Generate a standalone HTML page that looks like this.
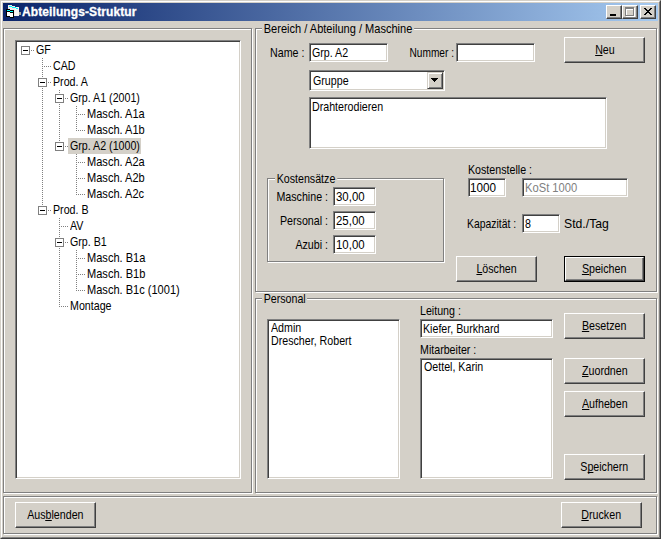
<!DOCTYPE html>
<html><head><meta charset="utf-8">
<style>
*{margin:0;padding:0;box-sizing:border-box}
html,body{width:661px;height:539px;overflow:hidden;background:#D4D0C8}
body{position:relative;font-family:"Liberation Sans",sans-serif;font-size:13px;color:#000}
.a{position:absolute}
.t,.gt{position:absolute;white-space:nowrap;line-height:15px;transform:scaleX(0.82);transform-origin:0 0}
.gt{background:linear-gradient(transparent 4px,#D4D0C8 4px,#D4D0C8 12px,transparent 12px);padding:0 2px}
.sk{position:absolute;background:#fff;border:1px solid;border-color:#808080 #fff #fff #808080;box-shadow:inset 1px 1px #404040,inset -1px -1px #D4D0C8}
.bt{position:absolute;background:#D4D0C8;border:1px solid;border-color:#fff #404040 #404040 #fff;box-shadow:inset -1px -1px #808080}
.bl{position:absolute;text-align:center;white-space:nowrap;line-height:15px}
.bl span{display:inline-block;transform:scaleX(0.82)}
.et{position:absolute;border:1px solid #808080;box-shadow:inset 1px 1px #fff,1px 1px #fff}
u{text-decoration:none;border-bottom:1px solid #000;display:inline-block;line-height:11px}
.dv{position:absolute;width:1px;background-image:linear-gradient(#808080 50%,transparent 50%);background-size:1px 2px}
.dh{position:absolute;height:1px;background-image:linear-gradient(90deg,#808080 50%,transparent 50%);background-size:2px 1px}
.bx{position:absolute;width:9px;height:9px;border:1px solid #808080;background:#fff}
.bx:after{content:"";position:absolute;left:1px;top:3px;width:5px;height:1px;background:#000}
</style></head><body>
<div class="a" style="left:0;top:0;width:661px;height:539px;border:1px solid;border-color:#D4D0C8 #404040 #404040 #D4D0C8"></div>
<div class="a" style="left:1px;top:1px;width:659px;height:537px;border:1px solid;border-color:#fff #808080 #808080 #fff"></div>
<div class="a" style="left:3px;top:3px;width:655px;height:18px;background:linear-gradient(90deg,#0A246A,#A6CAF0)"></div>
<div class="a" style="left:22px;top:4px;font-size:12px;font-weight:bold;color:#fff;line-height:16px;letter-spacing:0.1px;white-space:nowrap;-webkit-text-stroke:0.3px #fff">Abteilungs-Struktur</div>
<svg class="a" style="left:0;top:0" width="24" height="22" shape-rendering="crispEdges">
<rect x="8" y="5" width="4" height="11" fill="#F4ECEC"/>
<rect x="12" y="6" width="3" height="10" fill="#F4ECEC"/>
<rect x="15" y="7" width="4" height="9" fill="#F8F4F4"/>
<rect x="9" y="6" width="3" height="1" fill="#0FF"/>
<rect x="12" y="7" width="4" height="1" fill="#0FF"/>
<rect x="16" y="8" width="2" height="1" fill="#0FF"/>
<rect x="19" y="12" width="2" height="3" fill="#A8A898"/>
<rect x="6" y="9" width="4" height="8" fill="#000"/>
<rect x="10" y="10" width="4" height="8" fill="#000"/>
<rect x="7" y="10" width="3" height="1" fill="#0FF"/>
<rect x="10" y="11" width="3" height="1" fill="#0FF"/>
<rect x="7" y="12" width="3" height="4" fill="#fff"/>
<rect x="10" y="13" width="3" height="4" fill="#fff"/>
</svg>
<div class="bt" style="left:606px;top:5px;width:16px;height:14px"></div>
<div class="a" style="left:610px;top:14px;width:6px;height:2px;background:#000"></div>
<div class="bt" style="left:622px;top:5px;width:16px;height:14px"></div>
<div class="a" style="left:626px;top:8px;width:9px;height:9px;border:1px solid #fff;border-top-width:2px"></div>
<div class="a" style="left:625px;top:7px;width:9px;height:9px;border:1px solid #808080;border-top-width:2px"></div>
<div class="bt" style="left:640px;top:5px;width:16px;height:14px"></div>
<svg class="a" style="left:0;top:0" width="661" height="22" shape-rendering="crispEdges" fill="#000"><rect x="644" y="8" width="1" height="1"/><rect x="645" y="8" width="1" height="1"/><rect x="650" y="8" width="1" height="1"/><rect x="651" y="8" width="1" height="1"/><rect x="645" y="9" width="1" height="1"/><rect x="646" y="9" width="1" height="1"/><rect x="649" y="9" width="1" height="1"/><rect x="650" y="9" width="1" height="1"/><rect x="646" y="10" width="1" height="1"/><rect x="647" y="10" width="1" height="1"/><rect x="648" y="10" width="1" height="1"/><rect x="649" y="10" width="1" height="1"/><rect x="647" y="11" width="1" height="1"/><rect x="648" y="11" width="1" height="1"/><rect x="646" y="12" width="1" height="1"/><rect x="647" y="12" width="1" height="1"/><rect x="648" y="12" width="1" height="1"/><rect x="649" y="12" width="1" height="1"/><rect x="645" y="13" width="1" height="1"/><rect x="646" y="13" width="1" height="1"/><rect x="649" y="13" width="1" height="1"/><rect x="650" y="13" width="1" height="1"/><rect x="644" y="14" width="1" height="1"/><rect x="645" y="14" width="1" height="1"/><rect x="650" y="14" width="1" height="1"/><rect x="651" y="14" width="1" height="1"/></svg>
<div class="et" style="left:3px;top:28px;width:249px;height:465px"></div>
<div class="sk" style="left:15px;top:40px;width:226px;height:439px;background:#fff"></div>
<div class="dv" style="left:42px;top:58px;height:153px"></div>
<div class="bx" style="left:21px;top:46px"></div>
<div class="dh" style="left:31px;top:50px;width:4px"></div>
<div class="t" style="left:36px;top:42px;">GF</div>
<div class="dh" style="left:42px;top:66px;width:10px"></div>
<div class="t" style="left:53px;top:58px;">CAD</div>
<div class="dv" style="left:59px;top:90px;height:57px"></div>
<div class="bx" style="left:38px;top:78px"></div>
<div class="dh" style="left:48px;top:82px;width:4px"></div>
<div class="t" style="left:53px;top:74px;">Prod. A</div>
<div class="dv" style="left:76px;top:106px;height:25px"></div>
<div class="bx" style="left:55px;top:94px"></div>
<div class="dh" style="left:65px;top:98px;width:4px"></div>
<div class="t" style="left:70px;top:90px;">Grp. A1 (2001)</div>
<div class="dh" style="left:76px;top:114px;width:10px"></div>
<div class="t" style="left:87px;top:106px;transform:scaleX(0.85)">Masch. A1a</div>
<div class="dh" style="left:76px;top:130px;width:10px"></div>
<div class="t" style="left:87px;top:122px;transform:scaleX(0.85)">Masch. A1b</div>
<div class="dv" style="left:76px;top:154px;height:41px"></div>
<div class="bx" style="left:55px;top:142px"></div>
<div class="dh" style="left:65px;top:146px;width:4px"></div>
<div class="a" style="left:68px;top:138px;width:73px;height:16px;background:#D4D0C8"></div>
<div class="t" style="left:70px;top:138px;">Grp. A2 (1000)</div>
<div class="dh" style="left:76px;top:162px;width:10px"></div>
<div class="t" style="left:87px;top:154px;transform:scaleX(0.85)">Masch. A2a</div>
<div class="dh" style="left:76px;top:178px;width:10px"></div>
<div class="t" style="left:87px;top:170px;transform:scaleX(0.85)">Masch. A2b</div>
<div class="dh" style="left:76px;top:194px;width:10px"></div>
<div class="t" style="left:87px;top:186px;transform:scaleX(0.85)">Masch. A2c</div>
<div class="dv" style="left:59px;top:218px;height:89px"></div>
<div class="bx" style="left:38px;top:206px"></div>
<div class="dh" style="left:48px;top:210px;width:4px"></div>
<div class="t" style="left:53px;top:202px;">Prod. B</div>
<div class="dh" style="left:59px;top:226px;width:10px"></div>
<div class="t" style="left:70px;top:218px;">AV</div>
<div class="dv" style="left:76px;top:250px;height:41px"></div>
<div class="bx" style="left:55px;top:238px"></div>
<div class="dh" style="left:65px;top:242px;width:4px"></div>
<div class="t" style="left:70px;top:234px;">Grp. B1</div>
<div class="dh" style="left:76px;top:258px;width:10px"></div>
<div class="t" style="left:87px;top:250px;transform:scaleX(0.85)">Masch. B1a</div>
<div class="dh" style="left:76px;top:274px;width:10px"></div>
<div class="t" style="left:87px;top:266px;transform:scaleX(0.85)">Masch. B1b</div>
<div class="dh" style="left:76px;top:290px;width:10px"></div>
<div class="t" style="left:87px;top:282px;transform:scaleX(0.85)">Masch. B1c (1001)</div>
<div class="dh" style="left:59px;top:306px;width:10px"></div>
<div class="t" style="left:70px;top:298px;">Montage</div>
<div class="et" style="left:255px;top:28px;width:402px;height:264px"></div>
<div class="gt" style="left:262px;top:21px;transform:scaleX(0.85)">Bereich / Abteilung / Maschine</div>
<div class="t" style="left:270px;top:45px;">Name :</div>
<div class="sk" style="left:309px;top:43px;width:79px;height:19px;background:#fff"></div>
<div class="t" style="left:312px;top:45px;">Grp. A2</div>
<div class="t" style="left:154px;width:300px;text-align:right;transform-origin:100% 0;top:45px;transform:scaleX(0.78)">Nummer :</div>
<div class="sk" style="left:456px;top:43px;width:79px;height:19px;background:#fff"></div>
<div class="bt" style="left:564px;top:37px;width:81px;height:26px"></div>
<div class="bl" style="left:564px;top:42px;width:81px"><span><u>N</u>eu</span></div>
<div class="sk" style="left:309px;top:70px;width:136px;height:21px;background:#fff"></div>
<div class="t" style="left:313px;top:73px;">Gruppe</div>
<div class="bt" style="left:427px;top:72px;width:16px;height:17px;border-color:#D4D0C8 #404040 #404040 #D4D0C8;box-shadow:inset 1px 1px #fff,inset -1px -1px #808080"></div>
<svg class="a" style="left:431px;top:78px" width="7" height="4" shape-rendering="crispEdges"><rect x="0" y="0" width="7" height="1"/><rect x="1" y="1" width="5" height="1"/><rect x="2" y="2" width="3" height="1"/><rect x="3" y="3" width="1" height="1"/></svg>
<div class="sk" style="left:309px;top:97px;width:298px;height:52px;background:#fff"></div>
<div class="t" style="left:312px;top:99px;">Drahterodieren</div>
<div class="et" style="left:267px;top:178px;width:177px;height:84px"></div>
<div class="gt" style="left:275px;top:171px;">Kostensätze</div>
<div class="t" style="left:28px;width:300px;text-align:right;transform-origin:100% 0;top:189px;">Maschine :</div>
<div class="sk" style="left:333px;top:187px;width:43px;height:19px;background:#fff"></div>
<div class="t" style="left:336px;top:189px;transform:scaleX(0.88)">30,00</div>
<div class="t" style="left:28px;width:300px;text-align:right;transform-origin:100% 0;top:213px;">Personal :</div>
<div class="sk" style="left:333px;top:211px;width:43px;height:19px;background:#fff"></div>
<div class="t" style="left:336px;top:213px;transform:scaleX(0.88)">25,00</div>
<div class="t" style="left:28px;width:300px;text-align:right;transform-origin:100% 0;top:237px;">Azubi :</div>
<div class="sk" style="left:333px;top:235px;width:43px;height:19px;background:#fff"></div>
<div class="t" style="left:336px;top:237px;transform:scaleX(0.88)">10,00</div>
<div class="t" style="left:468px;top:162px;">Kostenstelle :</div>
<div class="sk" style="left:468px;top:178px;width:38px;height:19px;background:#fff"></div>
<div class="t" style="left:470px;top:180px;transform:scaleX(0.9)">1000</div>
<div class="sk" style="left:522px;top:178px;width:106px;height:19px;background:#fff"></div>
<div class="t" style="left:525px;top:180px;color:#808080;transform:scaleX(0.86)">KoSt 1000</div>
<div class="t" style="left:467px;top:216px;transform:scaleX(0.8)">Kapazität :</div>
<div class="sk" style="left:522px;top:214px;width:38px;height:19px;background:#fff"></div>
<div class="t" style="left:525px;top:216px;">8</div>
<div class="t" style="left:564px;top:216px;transform:scaleX(0.94)">Std./Tag</div>
<div class="bt" style="left:456px;top:256px;width:81px;height:26px"></div>
<div class="bl" style="left:456px;top:261px;width:81px"><span><u>L</u>öschen</span></div>
<div class="a" style="left:564px;top:256px;width:81px;height:26px;border:1px solid #000"></div>
<div class="bt" style="left:565px;top:257px;width:79px;height:24px"></div>
<div class="bl" style="left:565px;top:261px;width:79px"><span><u>S</u>peichen</span></div>
<div class="et" style="left:255px;top:298px;width:402px;height:195px"></div>
<div class="gt" style="left:262px;top:291px;">Personal</div>
<div class="sk" style="left:267px;top:319px;width:133px;height:160px;background:#fff"></div>
<div class="t" style="left:271px;top:320px;">Admin</div>
<div class="t" style="left:271px;top:333px;">Drescher, Robert</div>
<div class="t" style="left:420px;top:303px;">Leitung :</div>
<div class="sk" style="left:420px;top:319px;width:133px;height:19px;background:#fff"></div>
<div class="t" style="left:423px;top:321px;">Kiefer, Burkhard</div>
<div class="t" style="left:420px;top:342px;">Mitarbeiter :</div>
<div class="sk" style="left:420px;top:358px;width:133px;height:121px;background:#fff"></div>
<div class="t" style="left:424px;top:359px;">Oettel, Karin</div>
<div class="bt" style="left:564px;top:313px;width:81px;height:26px"></div>
<div class="bl" style="left:564px;top:318px;width:81px"><span><u>B</u>esetzen</span></div>
<div class="bt" style="left:564px;top:358px;width:81px;height:26px"></div>
<div class="bl" style="left:564px;top:363px;width:81px"><span><u>Z</u>uordnen</span></div>
<div class="bt" style="left:564px;top:391px;width:81px;height:26px"></div>
<div class="bl" style="left:564px;top:396px;width:81px"><span><u>A</u>ufheben</span></div>
<div class="bt" style="left:564px;top:454px;width:81px;height:26px"></div>
<div class="bl" style="left:564px;top:459px;width:81px"><span>S<u>p</u>eichern</span></div>
<div class="et" style="left:3px;top:496px;width:654px;height:38px"></div>
<div class="bt" style="left:15px;top:502px;width:81px;height:26px"></div>
<div class="bl" style="left:15px;top:507px;width:81px"><span>Aus<u>b</u>lenden</span></div>
<div class="bt" style="left:561px;top:502px;width:81px;height:26px"></div>
<div class="bl" style="left:561px;top:507px;width:81px"><span><u>D</u>rucken</span></div>
</body></html>
